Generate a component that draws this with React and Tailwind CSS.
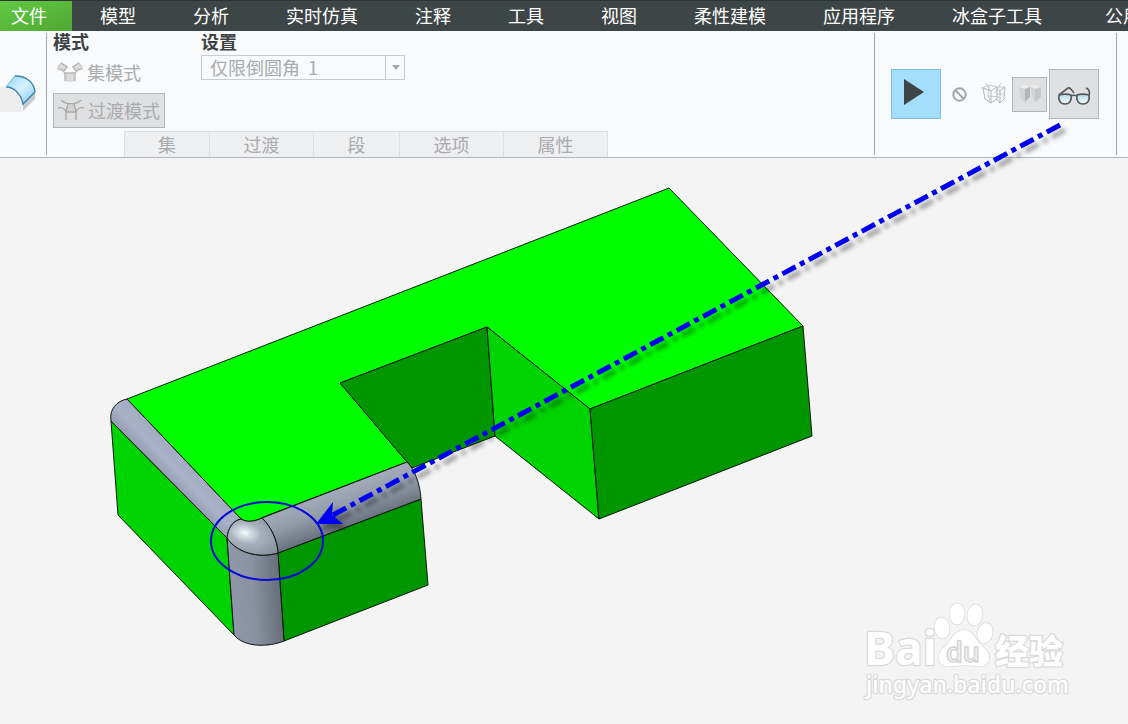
import React from 'react';

const menus = ['模型', '分析', '实时仿真', '注释', '工具', '视图', '柔性建模', '应用程序', '冰盒子工具', '公用'];

const panels = [
  { title: '集', width: 'w-[86px]' },
  { title: '过渡', width: 'w-[104px]' },
  { title: '段', width: 'w-[86px]' },
  { title: '选项', width: 'w-[104px]' },
  { title: '属性', width: 'w-[104px]' },
];

const RoundIcon = () => (
  <svg width="36" height="38" viewBox="0 0 36 38" aria-hidden="true">
    <defs>
      <linearGradient id="roundBlue" x1="0" y1="0" x2="1" y2="1">
        <stop offset="0" stopColor="#8fd4f5" />
        <stop offset="0.5" stopColor="#d6f3fe" />
        <stop offset="1" stopColor="#7cc6ee" />
      </linearGradient>
    </defs>
    <path d="M0 12 C10 11 19 19 22 30 V37 H0 Z" fill="#ededee" />
    <path d="M23 29 L35 17 V24 L23 36 Z" fill="#c6cbd0" />
    <path d="M6 12 L15 0 C26 0 34 7 35 17 L23 29 C21 19 14 12 6 12 Z" fill="url(#roundBlue)" />
    <path d="M6 12 C14 12 21 19 23 29 L35 17 C34 7 26 1 15 1" fill="none" stroke="#3f86ad" strokeWidth="1.5" />
    <path d="M6 12 L15 1" fill="none" stroke="#7fb4cf" />
  </svg>
);

const SetIcon = () => (
  <svg width="26" height="20" viewBox="0 0 26 20" fill="none" stroke="#b0b0b0" strokeWidth="1.2" aria-hidden="true">
    <path d="M4 1 L10 5 L7 9 L1 5 Z M22 1 L16 5 L19 9 L25 5 Z M9 11 H17 V19 H9 Z" fill="#dcdcdc" stroke="#cccccc" />
    <path d="M4 1 L10 5 L7 9 M0 7 C4 7 7 9 8 12 V19 M22 1 L16 5 L19 9 M26 7 C22 7 19 9 18 12 V19 M8 11 H18" />
  </svg>
);

const TransitionIcon = () => (
  <svg width="26" height="20" viewBox="0 0 26 20" fill="none" stroke="#a6a6a6" strokeWidth="1.3" aria-hidden="true">
    <path d="M3 0 C8 5 18 5 23 0 M0 8 C4 7 7 9 8 12 V20 M26 8 C22 7 19 9 18 12 V20 M8 12 H18" />
    <path d="M10 5 H16 L18 11 H8 Z" fill="#d2d3d4" stroke="none" />
    <path d="M10 4 L8 12 M16 4 L18 12" />
  </svg>
);

const BanIcon = () => (
  <svg width="15" height="15" viewBox="0 0 15 15" fill="none" stroke="#a3a5a7" strokeWidth="2" aria-hidden="true">
    <circle cx="7.5" cy="7.5" r="6.2" />
    <path d="M3.5 3.5 L11.5 11.5" />
  </svg>
);

const WireCubeIcon = () => (
  <svg width="26" height="22" viewBox="0 0 26 22" fill="none" stroke="#b4b5b7" aria-hidden="true">
    <path d="M2 5 L10 8 V20 L4 16 Z M10 8 L16 4 V16 L10 20 M24 4 L19 8 V20 L23 16 Z M16 6 L19 8 M16 16 L19 20" />
    <path d="M2 5 L8 2 L16 4 L24 4 M5 0 L10 8 M20 0 L14 10 M8 2 L7 13 L10 20 M7 13 L19 14 M0 5 L2 5 M24 11 H16" stroke="#c6c7c9" />
  </svg>
);

const SolidCubeIcon = () => (
  <svg width="24" height="18" viewBox="0 0 24 18" aria-hidden="true">
    <path d="M1 2 L6 0 L12 2 L7 4 Z M13 2 L17 0 L23 2 L17 4 Z" fill="#ececed" />
    <path d="M1 2 L7 4 V17 L2 12 Z M13 2 L17 4 V17 L14 12 Z" fill="#d2d3d4" />
    <path d="M7 4 L12 2 V12 L7 17 Z" fill="#b4b5b7" />
    <path d="M17 4 L23 2 V12 L17 17 Z" fill="#c6c7c9" />
  </svg>
);

const GlassesIcon = () => (
  <svg width="34" height="20" viewBox="0 0 34 20" fill="none" stroke="#55585a" strokeWidth="1.6" aria-hidden="true">
    <defs>
      <linearGradient id="lens" x1="0" y1="0" x2="0" y2="1">
        <stop offset="0" stopColor="#b4dcea" />
        <stop offset="1" stopColor="#f4fafc" />
      </linearGradient>
    </defs>
    <path d="M2 9 C6 8 11 8 14 9 C15 14 13 18 8 18 C3 18 1 14 2 9 Z" fill="url(#lens)" />
    <path d="M20 9 C23 8 28 8 32 9 C33 14 31 18 26 18 C21 18 19 14 20 9 Z" fill="url(#lens)" />
    <path d="M14 10 C16 9 18 9 20 10 M2 9 L11 2 C13 1 14 3 17 7 M32 10 C33 6 32 3 29 2" />
  </svg>
);

const Watermark = () => (
  <svg width="210" height="108" viewBox="0 0 210 108" className="block" role="img" aria-label="Baidu">
    <g fill="#ffffff" stroke="#dadada" strokeWidth="1.5" paintOrder="stroke">
      <ellipse cx="81" cy="34" rx="7.5" ry="10.5" transform="rotate(-8 81 34)" />
      <ellipse cx="96" cy="20" rx="7.5" ry="10.5" />
      <ellipse cx="114" cy="21" rx="7.5" ry="10.5" transform="rotate(10 114 21)" />
      <ellipse cx="124" cy="39" rx="7.5" ry="10" transform="rotate(14 124 39)" />
      <path d="M103 36 C110 36 114 43 118 49 C123 54 130 59 128 66 C126 73 118 73 113 72 C106 71 100 71 94 72 C88 73 80 73 78 66 C76 59 83 54 87 49 C91 43 96 36 103 36 Z" />
      <g strokeWidth="2.5" strokeLinejoin="round">
        <text x="3" y="71" fontSize="46" fontWeight="700" fontFamily="'Open Sans', sans-serif">Bai</text>
        <text x="134" y="70" fontSize="34" fontWeight="900" fontFamily="'Noto Sans CJK SC', sans-serif">经验</text>
        <text x="5" y="99" fontSize="23" fontWeight="500" fontFamily="'Noto Sans', sans-serif">jingyan.baidu.com</text>
      </g>
    </g>
    <text x="85" y="68" fontSize="27" fontWeight="600" fontFamily="'Open Sans', sans-serif" fill="#f4f4f4" stroke="#d4d4d4" strokeWidth="1.5">du</text>
  </svg>
);

const Model = () => (
  <svg viewBox="0 158 1128 566" className="pointer-events-none relative block w-full overflow-visible" role="img" aria-label="倒圆角">
    <defs>
      <linearGradient id="edgeLeft" gradientUnits="userSpaceOnUse" x1="182" y1="457" x2="158" y2="480">
        <stop offset="0" stopColor="#a3acc0" />
        <stop offset="0.4" stopColor="#a9b2c8" />
        <stop offset="1" stopColor="#8790a3" />
      </linearGradient>
      <linearGradient id="edgeRight" gradientUnits="userSpaceOnUse" x1="334" y1="490" x2="347" y2="526">
        <stop offset="0" stopColor="#a3abbb" />
        <stop offset="0.45" stopColor="#949daa" />
        <stop offset="1" stopColor="#6b747f" />
      </linearGradient>
      <linearGradient id="edgeFront" gradientUnits="userSpaceOnUse" x1="230" y1="600" x2="282" y2="597">
        <stop offset="0" stopColor="#8f98aa" />
        <stop offset="0.45" stopColor="#8a92a2" />
        <stop offset="1" stopColor="#646d77" />
      </linearGradient>
      <radialGradient id="corner" gradientUnits="userSpaceOnUse" cx="0" cy="0" r="1" gradientTransform="translate(245 533) rotate(12) scale(40 26)">
        <stop offset="0" stopColor="#f6fafb" />
        <stop offset="0.15" stopColor="#d5dde4" />
        <stop offset="0.4" stopColor="#a9b1bf" />
        <stop offset="1" stopColor="#858e9b" />
      </radialGradient>
      <filter id="shadow" x="-5%" y="-5%" width="110%" height="110%">
        <feDropShadow dx="5" dy="5" stdDeviation="2" floodColor="#000000" floodOpacity="0.35" />
      </filter>
    </defs>

    <g stroke="#0c140c" strokeLinejoin="round">
      <path d="M669 188 L803 326 L590 409 L487 327 L340 383 L407 462 L266 516 C256 521 246 525 238 516 L127 399 Z" fill="#00fe00" />
      <path d="M340 383 L487 327 L495 436 L412 468 L407 462 Z" fill="#009600" />
      <path d="M487 327 L590 409 L599 519 L495 436 Z" fill="#00d400" />
      <path d="M590 409 L803 326 L812 436 L599 519 Z" fill="#009600" />
      <path d="M111 421 L227 538 L234 635 L118 515 Z" fill="#00d400" />
      <path d="M278 553 L421 499 L428 585 L284 641 Z" fill="#009600" />
      <path d="M127 399 C117 401 109 409 111 421 L227 538 C228 529 232 521 241 519 Z" fill="url(#edgeLeft)" />
      <path d="M262 518 L407 462 C415 470 420 484 421 499 L278 553 C277 539 271 527 262 518 Z" fill="url(#edgeRight)" />
      <path d="M227 538 C236 552 258 559 278 553 L284 641 C269 647 245 648 234 635 Z" fill="url(#edgeFront)" />
      <path d="M241 519 C247 523 256 521 262 518 C271 527 277 539 278 553 C258 559 236 552 227 538 C228 529 232 521 241 519 Z" fill="url(#corner)" />
    </g>

    <ellipse cx="267" cy="541" rx="56" ry="39" fill="none" stroke="#0808d8" strokeWidth="2" />
    <g filter="url(#shadow)">
      <path d="M1060 125 L331 516" fill="none" stroke="#0000f0" strokeWidth="5" strokeDasharray="15 5 5 5" />
      <path d="M316 524 L333 502 L332 515 L343 524 Z" fill="#0000f0" />
    </g>
  </svg>
);

const App = () => {
  return (
    <div className="flex min-h-screen flex-col overflow-hidden bg-[#f4f4f4] font-['Noto_Sans_CJK_SC',sans-serif]">
      <nav className="flex h-[31px] items-start overflow-hidden border-t border-[#2b3335] bg-[#3e4546] text-lg leading-7 whitespace-nowrap text-white">
        <button type="button" className="h-full w-[72px] shrink-0 bg-linear-to-br from-[#63c944] to-[#4fa832] pr-3.5 pb-0.5">
          文件
        </button>
        <div className="ml-7 flex gap-[57px]">
          {menus.map((menu) => (
            <button type="button" key={menu} className="shrink-0 last:pl-1.5">
              {menu}
            </button>
          ))}
        </div>
      </nav>

      <header className="flex h-[127px] border-b border-[#b2b6ba] bg-[#f8fafc] text-lg text-[#a9abad]">
        <div className="flex w-[46px] shrink-0 items-center">
          <button type="button" aria-label="倒圆角">
            <RoundIcon />
          </button>
        </div>

        <div className="my-0.5 w-px bg-[#a3a7aa]" />

        <div className="flex min-w-0 flex-1 flex-col justify-between">
          <div className="flex">
            <div className="w-[154px] pl-1.5">
              <h2 className="h-[22px] font-bold leading-5 text-[#3e4143]">模式</h2>
              <button type="button" className="flex h-10 items-center gap-1 pb-0.5 pl-1">
                <SetIcon />
                集模式
              </button>
              <button type="button" className="flex h-[35px] w-28 items-center gap-1 border border-[#b3b5b7] bg-[#dfe0e1] pb-0.5 pl-1">
                <TransitionIcon />
                过渡模式
              </button>
            </div>
            <div>
              <label htmlFor="setting" className="block h-6 font-bold leading-5 text-[#3e4143]">
                设置
              </label>
              <div className="relative">
                <select id="setting" className="block h-[25px] w-[204px] appearance-none border border-[#c9cccf] bg-[#f8fafc] pb-0.5 pl-2 leading-5">
                  <option>仅限倒圆角&nbsp; 1</option>
                </select>
                <span className="pointer-events-none absolute inset-y-0 right-0 flex w-5 items-center justify-center border-l border-[#c9cccf]">
                  <span className="border-x-4 border-t-5 border-x-transparent border-t-[#a5a7a9]" />
                </span>
              </div>
            </div>
          </div>
          <div className="ml-[77px] flex h-[26px]">
            {panels.map((panel) => (
              <button
                type="button"
                key={panel.title}
                className={`${panel.width} border-t border-r border-[#dcdee0] bg-[#eeeff1] leading-[25px] first:border-l`}
              >
                {panel.title}
              </button>
            ))}
          </div>
        </div>

        <div className="my-0.5 w-px bg-[#a3a7aa]" />

        <div className="flex w-[241px] shrink-0 items-center pl-4">
          <button type="button" aria-label="继续" className="flex size-[50px] items-center justify-center border border-[#7cc0e4] bg-[#a3defd]">
            <svg width="20" height="28" viewBox="0 0 20 28" className="mr-1 mb-1" aria-hidden="true">
              <path d="M0 1 L20 14 L0 27 Z" fill="#3f4447" />
            </svg>
          </button>
          <button type="button" aria-label="无预览" className="ml-[11px]">
            <BanIcon />
          </button>
          <button type="button" aria-label="分离" className="ml-3.5">
            <WireCubeIcon />
          </button>
          <button type="button" aria-label="连接" className="ml-[5px] flex size-[35px] items-center justify-center border border-[#b3b5b7] bg-[#dfe0e1]">
            <SolidCubeIcon />
          </button>
          <button type="button" aria-label="特征预览" className="ml-0.5 flex size-[50px] items-center justify-center border border-[#b3b5b7] bg-[#dfe0e1] pt-1">
            <GlassesIcon />
          </button>
        </div>

        <div className="my-0.5 w-px bg-[#a3a7aa]" />
        <div className="w-[11px] shrink-0" />
      </header>

      <main className="relative flex-1">
        <Model />
        <div className="absolute right-[57px] bottom-[22px]">
          <Watermark />
        </div>
      </main>
    </div>
  );
};

export default App;
